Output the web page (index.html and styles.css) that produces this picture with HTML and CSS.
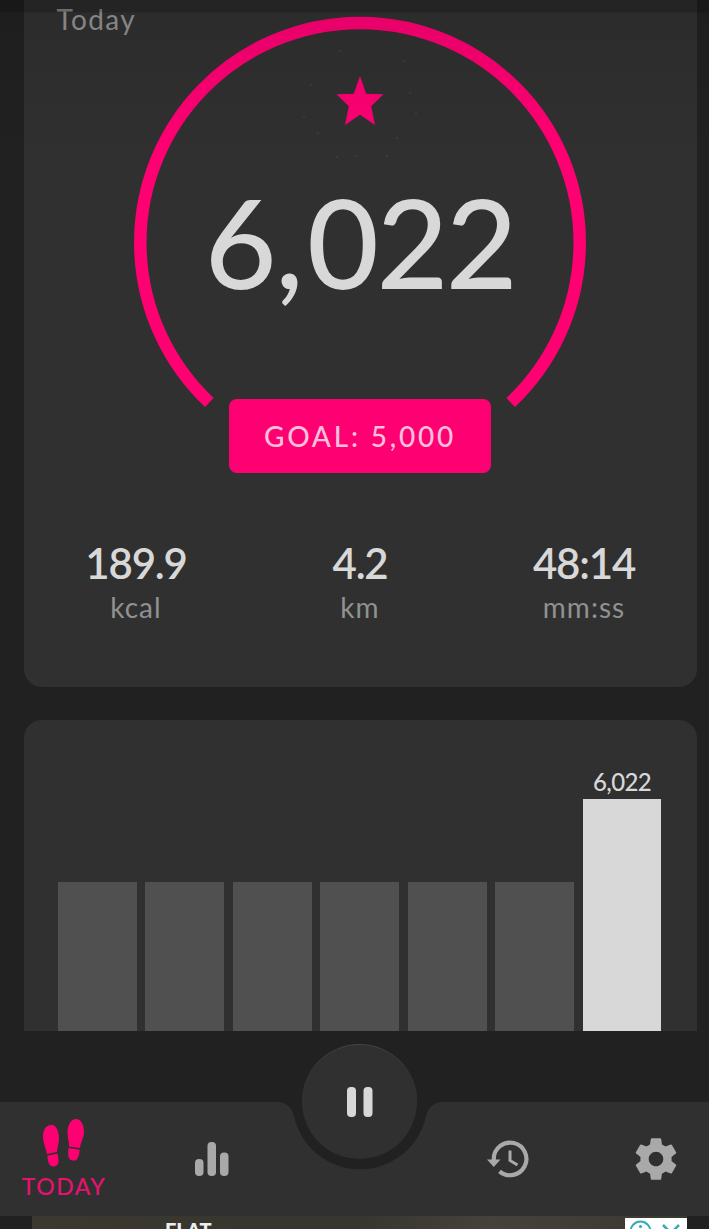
FILE: index.html
```html
<!DOCTYPE html>
<html lang="en">
<head>
  <meta charset="UTF-8">
  <meta name="viewport" content="width=device-width, initial-scale=1.0">
  <title>Step Counter</title>
  <link rel="stylesheet" href="styles.css">
</head>
<body>
  <main class="content">
    <section class="card today-card">
      <h2 class="card-title">Today</h2>
      <div class="gauge">
        <svg class="gauge-ring" viewBox="0 0 460 400">
          <path d="M79.3 389.5A219.7 219.7 0 1 1 380.7 389.5" fill="none" stroke="#ff0073" stroke-width="12.5"/>
          <path d="M230 63L236.2 80.8L253.5 81.2L241.2 93.2L245 112L230 101.8L215 112L218.8 93.2L206.5 81.2L223.8 80.8Z" fill="#ff0073"/>
          <g fill="#7d2f50">
            <circle cx="210" cy="38" r=".8"/><circle cx="274" cy="48" r=".8"/>
            <circle cx="181" cy="72" r=".8"/><circle cx="280" cy="80" r=".8"/>
            <circle cx="174" cy="104" r=".8"/><circle cx="286" cy="101" r=".8"/>
            <circle cx="188" cy="120" r=".8"/><circle cx="267" cy="125" r=".8"/>
            <circle cx="207" cy="144" r=".8"/><circle cx="226" cy="143" r=".8"/>
            <circle cx="257" cy="143" r=".8"/>
          </g>
        </svg>
        <div class="steps">6<span>,</span>022</div>
      </div>
      <button class="goal">GOAL: 5,000</button>
      <div class="stats">
        <div class="stat"><b>189.9</b><span>kcal</span></div>
        <div class="stat"><b>4.2</b><span>km</span></div>
        <div class="stat"><b>48:14</b><span>mm:ss</span></div>
      </div>
    </section>
    <section class="card chart">
      <div class="bar"></div>
      <div class="bar"></div>
      <div class="bar"></div>
      <div class="bar"></div>
      <div class="bar"></div>
      <div class="bar"></div>
      <div class="bar current"><span>6,022</span></div>
    </section>
  </main>

  <nav class="navbar">
    <svg class="nav-bg" viewBox="0 0 709 114">
      <path d="M0 0H277Q290 0 294 14A67.500 67.500 0 0 0 426 14Q430 0 443 0H709V114H0Z" fill="#303030"/>
    </svg>
    <a class="nav-item active">
      <svg width="44" height="50" viewBox="0 0 44 50" fill="#ff0073">
        <path d="M9 7C14 6 17 13 17 21C17 26 15 29 15 34L5 36C4 30 1 25 1 18C1 12 4 7 9 7Z"/>
        <path d="M5.500 37.500L15.500 35.700C17 43 17.500 47 12.500 48.500C7 49.500 5.500 43 5.500 37.500Z"/>
        <path d="M34 1C39 1 42 7 42 14C42 20 38.500 24 38 30L27 28.500C27.500 24 25.500 20 25.500 15C25.500 7 29 1 34 1Z"/>
        <path d="M26.500 30L37.700 31.800C37 39 35.500 43.500 30.500 42.500C25.500 41.500 26 36 26.500 30Z"/>
      </svg>
      <span>TODAY</span>
    </a>
    <a class="nav-item">
      <svg width="34" height="34" viewBox="0 0 34 34" fill="#a9a9a9">
        <rect x="0" y="17" width="8.500" height="17" rx="4"/>
        <rect x="12.500" y="0" width="8.500" height="34" rx="4"/>
        <rect x="25" y="10.500" width="8.500" height="23.500" rx="4"/>
      </svg>
    </a>
    <button class="pause">
      <svg width="26" height="30" viewBox="0 0 26 30" fill="#d8d8d8">
        <rect x="0" y="0" width="9" height="30" rx="4"/>
        <rect x="16.500" y="0" width="9" height="30" rx="4"/>
      </svg>
    </button>
    <a class="nav-item">
      <svg width="42" height="38" viewBox="0 0 42 38">
        <path d="M6.800 20V19A16.300 16.300 0 1 1 12.500 31.300" fill="none" stroke="#a9a9a9" stroke-width="4.200"/>
        <path d="M0 19.500H13.500L6.800 27Z" fill="#a9a9a9"/>
        <path d="M23 10.500V20.500L30.500 25" fill="none" stroke="#a9a9a9" stroke-width="3"/>
      </svg>
    </a>
    <a class="nav-item">
      <svg width="50" height="50" viewBox="0 0 24 24" fill="#a9a9a9">
        <path d="M19.430 12.980c.04-.32.07-.64.07-.98s-.03-.66-.07-.98l2.110-1.650c.19-.15.24-.42.12-.64l-2-3.460c-.12-.22-.39-.3-.61-.22l-2.490 1c-.52-.4-1.080-.73-1.690-.98l-.38-2.650C14.460 2.180 14.250 2 14 2h-4c-.25 0-.46.18-.49.42l-.38 2.650c-.61.25-1.170.59-1.690.98l-2.490-1c-.23-.09-.49 0-.61.22l-2 3.460c-.13.22-.07.49.12.64l2.110 1.650c-.04.32-.07.65-.07.98s.03.66.07.98l-2.110 1.650c-.19.15-.24.42-.12.64l2 3.460c.12.22.39.3.61.22l2.490-1c.52.4 1.080.73 1.690.98l.38 2.650c.03.24.24.42.49.42h4c.25 0 .46-.18.49-.42l.38-2.650c.61-.25 1.170-.59 1.690-.98l2.490 1c.23.09.49 0 .61-.22l2-3.460c.12-.22.07-.49-.12-.64l-2.110-1.650zM12 15.500c-1.930 0-3.500-1.570-3.500-3.500s1.570-3.500 3.500-3.500 3.500 1.570 3.500 3.500-1.570 3.500-3.500 3.500z"/>
      </svg>
    </a>
  </nav>

  <div class="ad">
    <div class="ad-image">
      <span class="ad-text">FLAT</span>
      <svg class="ad-choices" width="62" height="12" viewBox="0 0 62 12">
        <rect width="62" height="12" fill="#fff"/>
        <circle cx="15.500" cy="13.500" r="10" fill="none" stroke="#35aab8" stroke-width="2"/>
        <circle cx="15.500" cy="8.500" r="1.600" fill="#35aab8"/>
        <path d="M38 7L46 15L54 7" fill="none" stroke="#35aab8" stroke-width="2.500"/>
      </svg>
    </div>
  </div>
</body>
</html>
```

FILE: styles.css
```css
* {
  box-sizing: border-box;
}
body {
  margin: 0;
  width: 709px;
  height: 1229px;
  overflow: hidden;
  display: flex;
  flex-direction: column;
  background: #212121;
  color: #d8d8d8;
  font-family: Lato, sans-serif;
}
button {
  border: none;
  padding: 0;
  font-family: inherit;
}
.content {
  position: relative;
  height: 1031px;
  padding: 0 12.5px 0 23.5px;
  overflow: hidden;
}
/* shadow of the app bar over the scrolled content */
.content::before {
  content: "";
  position: absolute;
  inset: 0 0 auto 0;
  height: 160px;
  background: linear-gradient(rgba(0, 0, 0, 0.26) 0 12px, rgba(0, 0, 0, 0.09) 13px, transparent);
}
.card {
  background: #303030;
}
.today-card {
  height: 687px;
  border-radius: 0 0 18px 18px;
  display: flex;
  flex-direction: column;
  align-items: center;
}
.card-title {
  align-self: flex-start;
  height: 13px;
  margin: 0 0 0 33px;
  padding-top: 3px;
  font-size: 28px;
  font-weight: 400;
  line-height: 32px;
  letter-spacing: 1.4px;
  color: #919191;
}
.gauge {
  display: grid;
  width: 460px;
  height: 386px;
}
.gauge-ring {
  grid-area: 1 / 1;
  width: 460px;
  height: 400px;
}
.steps {
  grid-area: 1 / 1;
  padding-top: 153px;
  text-align: center;
  font-size: 124px;
  font-weight: 500;
  line-height: 150px;
  letter-spacing: -2.5px;
}
.steps span {
  margin: 0 6px 0 1px;
}
.goal {
  width: 262px;
  height: 74px;
  border-radius: 8px;
  background: #ff0073;
  color: #fbc0da;
  font-size: 28px;
  font-weight: 500;
  letter-spacing: 2.8px;
}
.stats {
  display: flex;
  justify-content: space-between;
  width: 598px;
  margin-top: 65px;
}
.stat {
  width: 150px;
  text-align: center;
}
.stat b {
  display: block;
  font-size: 42px;
  font-weight: 600;
  line-height: 50px;
  letter-spacing: -1.2px;
}
.stat span {
  display: block;
  font-size: 28px;
  line-height: 38px;
  letter-spacing: 1px;
  color: #919191;
}
.chart {
  display: flex;
  align-items: flex-end;
  gap: 8.6px;
  height: 311px;
  margin-top: 33px;
  padding: 0 35px 0 34.5px;
  border-radius: 18px 18px 0 0;
}
.bar {
  flex: 1;
  height: 149px;
  background: #505050;
}
.bar.current {
  height: 232px;
  background: #d8d8d8;
}
.bar span {
  display: block;
  margin-top: -31px;
  text-align: center;
  font-size: 24px;
  font-weight: 500;
  line-height: 28px;
  letter-spacing: -0.6px;
}
.navbar {
  position: relative;
  display: flex;
  height: 114px;
  margin-top: 71px;
}
.nav-bg {
  position: absolute;
  inset: 0;
}
.nav-item {
  position: relative;
  display: flex;
  flex-direction: column;
  flex-shrink: 0;
  align-items: center;
  justify-content: center;
  width: 148px;
}
.nav-item.active {
  gap: 4px;
  width: 128px;
  margin-right: 10px;
  color: #e5126f;
  font-size: 23px;
  font-weight: 500;
  line-height: 28px;
  letter-spacing: 1.5px;
}
.pause {
  position: relative;
  display: flex;
  flex-shrink: 0;
  align-items: center;
  justify-content: center;
  width: 115px;
  height: 115px;
  margin: -58px 17px 0 16px;
  border-radius: 50%;
  border-top: 1px solid #444;
  background: #303030;
}
.ad {
  height: 13px;
  padding: 0 22px 0 32px;
  overflow: hidden;
}
.ad-image {
  display: flex;
  justify-content: space-between;
  height: 13px;
  background: linear-gradient(90deg, #3a382f, #37362f 50%, #45423b 70%, #39382f);
}
.ad-text {
  margin: 4px 0 0 133px;
  color: #eee;
  font-size: 20px;
  font-weight: 900;
  line-height: 20px;
}
.ad-choices {
  margin-top: 2px;
}
```
